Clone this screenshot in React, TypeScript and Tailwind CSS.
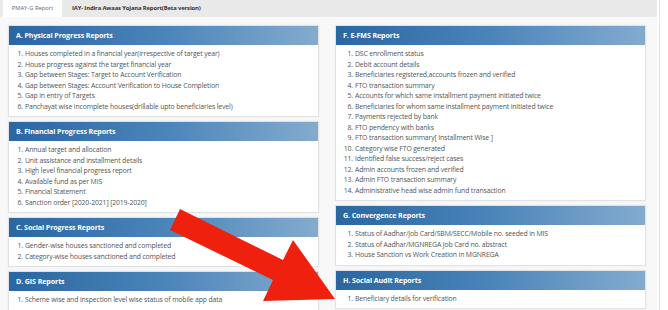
import React from "react";

type Panel = { title: string; items: string[] };

const left: Panel[] = [
  {
    title: "A. Physical Progress Reports",
    items: [
      "Houses completed in a financial year(irrespective of target year)",
      "House progress against the target financial year",
      "Gap between Stages: Target to Account Verification",
      "Gap between Stages: Account Verification to House Completion",
      "Gap in entry of Targets",
      "Panchayat wise incomplete houses(drillable upto beneficiaries level)",
    ],
  },
  {
    title: "B. Financial Progress Reports",
    items: [
      "Annual target and allocation",
      "Unit assistance and installment details",
      "High level financial progress report",
      "Available fund as per MIS",
      "Financial Statement",
      "Sanction order [2020-2021] [2019-2020]",
    ],
  },
  {
    title: "C. Social Progress Reports",
    items: [
      "Gender-wise houses sanctioned and completed",
      "Category-wise houses sanctioned and completed",
    ],
  },
  {
    title: "D. GIS Reports",
    items: ["Scheme wise and inspection level wise status of mobile app data"],
  },
];

const right: Panel[] = [
  {
    title: "F. E-FMS Reports",
    items: [
      "DSC enrollment status",
      "Debit account details",
      "Beneficiaries registered,accounts frozen and verified",
      "FTO transaction summary",
      "Accounts for which same installment payment initiated twice",
      "Beneficiaries for whom same installment payment initiated twice",
      "Payments rejected by bank",
      "FTO pendency with banks",
      "FTO transaction summary[ Installment Wise ]",
      "Category wise FTO generated",
      "Identified false success/reject cases",
      "Admin accounts frozen and verified",
      "Admin FTO transaction summary",
      "Administrative head wise admin fund transaction",
    ],
  },
  {
    title: "G. Convergence Reports",
    items: [
      "Status of Aadhar/Job Card/SBM/SECC/Mobile no. seeded in MIS",
      "Status of Aadhar/MGNREGA Job Card no. abstract",
      "House Sanction vs Work Creation in MGNREGA",
    ],
  },
  {
    title: "H. Social Audit Reports",
    items: ["Beneficiary details for verification"],
  },
];

function PanelBox({ p, wide }: { p: Panel; wide: boolean }) {
  return (
    <div className="bg-white border border-[#e2e2e2] shadow-[0_0_2px_rgba(0,0,0,0.06)]">
      <div className="h-[19px] flex items-center pl-[7px] bg-gradient-to-r from-[#2a66a0] via-[#4a84b9] to-[#84abcf] text-white font-bold text-[7.1px] tracking-[-0.1px]">
        {p.title}
      </div>
      <ol className="pt-[4px] pb-[4px] text-[#555] text-[6.9px] leading-[10.5px] tracking-[-0.15px]">
        {p.items.map((t, i) => (
          <li key={i} className="flex whitespace-nowrap">
            <span
              className={
                wide
                  ? "w-[17px] text-right shrink-0"
                  : "w-[14px] text-right shrink-0"
              }
            >
              {i + 1}.
            </span>
            <span className="ml-[2px]">{t}</span>
          </li>
        ))}
      </ol>
    </div>
  );
}

export default function App() {
  return (
    <div
      className="relative w-[668px] h-[310px] overflow-hidden bg-[#f8f8f8] flex"
      style={{ fontFamily: '"Open Sans", "Noto Sans", sans-serif' }}
    >
      <div className="w-[657px] shrink-0 flex flex-col">
        <div className="h-[17px] bg-[#e9e9e9] flex items-end pl-[3px]">
          <div className="h-[17px] w-[59px] bg-white flex items-center justify-center text-[#666] text-[5.8px]">
            PMAY-G Report
          </div>
          <div className="h-[17px] flex items-center pl-[10px] text-[#333] font-bold text-[5.9px] tracking-[-0.15px]">
            IAY- Indira Awaas Yojana Report(Beta version)
          </div>
        </div>
        <div className="flex gap-[16px] pl-[8px] pt-[8px]">
          <div className="w-[311px] flex flex-col gap-[4px]">
            {left.map((p) => (
              <PanelBox key={p.title} p={p} wide={false} />
            ))}
          </div>
          <div className="w-[311px] flex flex-col gap-[4px]">
            {right.map((p) => (
              <PanelBox key={p.title} p={p} wide={true} />
            ))}
          </div>
        </div>
      </div>
      <div className="flex-1 flex bg-white">
        <div className="w-[2px]" />
        <div className="w-[1px] bg-[#e2e2e2]" />
      </div>
      <svg
        className="absolute left-0 top-0 pointer-events-none"
        width="668"
        height="310"
        viewBox="0 0 668 310"
      >
        <polygon
          points="180,209 283,260 293,240 335,299 263,301 273,280 170,230"
          fill="#f0200f"
        />
      </svg>
    </div>
  );
}
